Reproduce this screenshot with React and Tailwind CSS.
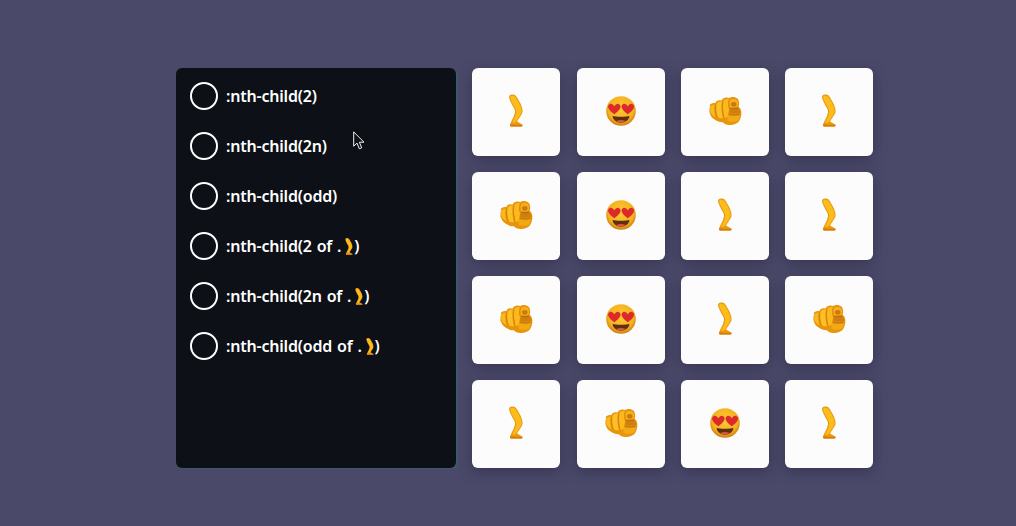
const FONT = "font-['Noto_Sans',sans-serif]";

// leg, heart-eyes and pointing fist are drawn because no emoji font is available
function Leg({ className }) {
  return (
    <svg viewBox="0 0 13 30" className={className}>
      <path d="M2.500.2C1 .2-.3 1.700.1 3.400 1 6.500 3 10 4.800 13.200 5.500 14.500 5.800 15.800 5.500 17.200 4.800 20.500 2.800 24 1.300 27 .8 28.200.8 29.900 2 29.900H11.500C12.800 29.900 13 28.400 11.900 27.700L7.500 25.300C9 22 12.500 19 12.600 15.500 12.700 11.500 9.500 6 6.500 1.500 5.700.5 4 .2 2.500.2Z" fill="#ea990e" />
      <path d="M2.600 1.200C1.500 1.200.8 2.300 1.100 3.500 2 6.500 4 9.800 5.800 13 6.600 14.500 6.900 16 6.600 17.600 6 20.400 4.400 23.500 3 26.300 4.500 26.600 5.800 26.300 6.500 25.300 8 22 11.600 18.800 11.700 15.500 11.800 11.800 8.800 6.500 5.700 2.200 5 1.400 3.800 1.200 2.600 1.200Z" fill="#fcbc1c" />
      <path d="M1 27.800C3.500 28.500 8 28.400 12.400 28.300 12.500 29.100 12.100 29.900 11.500 29.900H2C1.100 29.900.8 28.800 1 27.800Z" fill="#cf7c0b" />
    </svg>
  );
}

function Heart({ x, y }) {
  return (
    <path
      transform={`translate(${x} ${y})`}
      d="M0 2.600C-1-.1-3.200-.6-4.500-.1-6.100.5-6.600 2.400-6 4-5.200 6.100-2.600 8.300 0 10.200 2.600 8.300 5.200 6.100 6 4 6.600 2.400 6.100.5 4.500-.1 3.200-.6 1-.1 0 2.600Z"
      fill="#dc2a2a"
    />
  );
}

function HeartEyes() {
  return (
    <svg viewBox="0 0 30 30" className="w-[30px] h-[30px] -mt-[2px]">
      <defs>
        <radialGradient id="face" cx="50%" cy="42%" r="58%">
          <stop offset="0%" stopColor="#fcc934" />
          <stop offset="72%" stopColor="#f6b322" />
          <stop offset="100%" stopColor="#cf7d10" />
        </radialGradient>
      </defs>
      <circle cx="15" cy="15" r="14.800" fill="url(#face)" />
      <path d="M6.500 20c3 .9 14 .9 17 0-.5 3.900-4 6.700-8.500 6.700s-8-2.800-8.500-6.700Z" fill="#5e2f10" />
      <path d="M10.400 25c2.600-1.300 6.600-1.300 9.200 0-1.400 1.100-2.900 1.700-4.600 1.700s-3.200-.6-4.600-1.700Z" fill="#d9583f" />
      <Heart x={8.300} y={8} />
      <Heart x={21.800} y={8} />
    </svg>
  );
}

function Fist() {
  return (
    <svg viewBox="1.500 0 32 29" className="w-[34px] h-[30px] -mt-[3px]">
      <path d="M2.500 9.500C3.500 7 6 6.500 8 7c1-2.500 3.500-3.500 6-2.500C15.500 1.500 19 .6 21.500 2c2-1.500 6-1.500 8 .5 2 2.100 2 5.500 1.200 8 1.800 1.400 2.900 4 2.600 7-.3 3.300-1.300 6-2.600 7.500-1.700 2-5 3.100-8.700 3-3.200-.1-5.200-.9-6.500-2.700-2 .2-4.500-.3-6-1.300-3-1.200-5.500-3.500-6.500-6.500-1-2.500-.7-5.300.5-8Z" fill="#e8950c" />
      <path d="M3.500 11c.6-2 2.500-3 4-2.500-.9 3.500-.6 8 1 12-2.700-1.300-4.500-3.100-5.200-5.300-.3-1.500-.2-3 .2-4.200Z" fill="#fbb91c" />
      <path d="M9.500 7.500c1-2 3-2.700 5-1.800-.9 4-.6 10 1 15.500-1.800.5-3.500.2-4.700-.5-1.700-4.200-2.200-9-1.300-13.200Z" fill="#fcc026" />
      <path d="M16 5c1.300-2.300 3.500-2.600 5.500-1.500-.5 1.800-.2 5 .3 7.500l-2 9.500c-1 .4-2 .7-2.700.7-1.600-5-2-11.700-1.100-16.200Z" fill="#fbb91c" />
      <path d="M22.500 4c2-1.800 5.400-1.500 6.800.3 1 1.500 1 3.800.4 5.800-2 .9-5.600 1-7.600.4-.5-2.200-.5-4.800.4-6.500Z" fill="#f6ae1a" />
      <ellipse cx="26" cy="8" rx="2.600" ry="2.300" fill="#c97a10" />
      <path d="M22 12c2.800.8 6.500.5 8-.7 1.500 1 2.500 2.800 2.300 5.200-2.800 1-7.500 1-10.800.2Z" fill="#cf8010" />
      <path d="M21 18c3.500.9 8 .8 11-.2-.3 3-1.200 5.200-2.400 6.400-2.300.9-6.500.8-9.500 0-.4-2-.2-4.400.9-6.200Z" fill="#f2a914" />
      <path d="M22.800 11.900c2 .6 5 .5 7-.2M21.200 17.900c3.200.9 7.500.8 10.500-.2" fill="none" stroke="#a9610c" strokeWidth="0.800" />
      <path d="M8.500 8.500c-.6 4-.2 8.500 1.300 12.300M15.200 6c-.6 5 0 10.500 1.400 15.300M21.500 4c-.8 3-.5 7 .3 8.500" fill="none" stroke="#cf8210" strokeWidth="0.900" />
    </svg>
  );
}

const OPTIONS = [
  [':nth-child(2)'],
  [':nth-child(2n)'],
  [':nth-child(odd)'],
  [':nth-child(2 of .', ')'],
  [':nth-child(2n of .', ')'],
  [':nth-child(odd of .', ')'],
];

const CARDS = ['leg', 'heart', 'fist', 'leg', 'fist', 'heart', 'leg', 'leg', 'fist', 'heart', 'leg', 'fist', 'leg', 'fist', 'heart', 'leg'];

function Card({ kind }) {
  return (
    <div className="w-[88px] h-[88px] rounded-md bg-[#fcfcfd] shadow-[0_4px_14px_rgba(20,18,45,0.35)] flex items-center justify-center">
      {kind === 'leg' && <Leg className="w-[14px] h-[33px] -mt-[3px]" />}
      {kind === 'heart' && <HeartEyes />}
      {kind === 'fist' && <Fist />}
    </div>
  );
}

export default function App() {
  return (
    <div className={`relative w-[1016px] h-[526px] overflow-hidden bg-[#4b4969] pl-[176px] pt-[68px] flex items-start gap-[16.400px] ${FONT}`}>
      <div className="w-[280px] h-[400px] shrink-0 rounded-md bg-[#0d1117] shadow-[1.500px_1px_1px_#3c5a6c] p-[14px] flex flex-col gap-[22px]">
        {OPTIONS.map(([text, end], i) => (
          <div key={i} className="flex items-center gap-2 h-7">
            <span className="w-7 h-7 rounded-full border-2 border-white shrink-0" />
            <span className="text-[16px] font-semibold text-white leading-none tracking-[-0.2px] flex items-center whitespace-pre [word-spacing:1px]">
              {text}
              {end && <Leg className="w-[8px] h-[17px] ml-[4px] mr-[1px]" />}
              {end}
            </span>
          </div>
        ))}
      </div>

      <div className="grid grid-cols-[repeat(4,88px)] gap-x-[16.200px] gap-y-4">
        {CARDS.map((kind, i) => (
          <Card key={i} kind={kind} />
        ))}
      </div>

      {/* mouse pointer */}
      <svg viewBox="0 0 12 19" className="absolute left-[353px] top-[131px] w-[12px] h-[19px]">
        <path d="M.7.900V15.200L4 12.100 6.300 17.800 8.700 16.800 6.400 11.200H11Z" fill="#111418" stroke="#f2f2f2" strokeWidth="1" />
      </svg>
    </div>
  );
}
